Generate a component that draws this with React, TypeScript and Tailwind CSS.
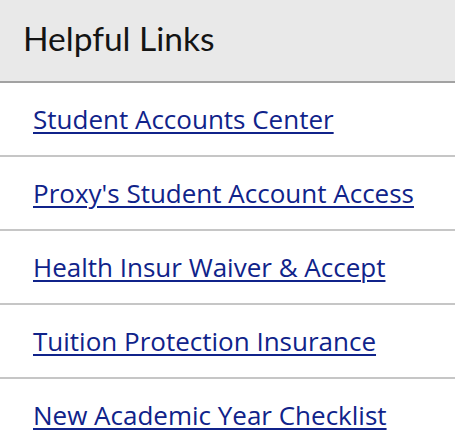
const LINKS = [
  'Student Accounts Center',
  "Proxy's Student Account Access",
  'Health Insur Waiver & Accept',
  'Tuition Protection Insurance',
  'New Academic Year Checklist',
];

export default function App() {
  return (
    <div className="w-[455px] h-[448px] overflow-hidden bg-white">
      {/* header */}
      <div className="h-[83px] box-border flex items-center pl-[23px] pb-[3px] bg-[#e9e9e9] border-b-2 border-[#a2a2a2]">
        <h2 className="text-[33.5px] leading-none text-[#141414] font-['Lato',sans-serif] font-normal">
          Helpful Links
        </h2>
      </div>

      {/* links */}
      <ul>
        {LINKS.map((label) => (
          <li
            key={label}
            className="h-[74px] box-border flex items-center pl-[33px] border-b-2 border-[#c6c6c6]"
          >
            <a
              href="#"
              className="text-[26px] leading-none text-[#10238a] underline underline-offset-[3px] decoration-[1.5px] font-['Open_Sans',sans-serif]"
            >
              {label}
            </a>
          </li>
        ))}
      </ul>
    </div>
  );
}
